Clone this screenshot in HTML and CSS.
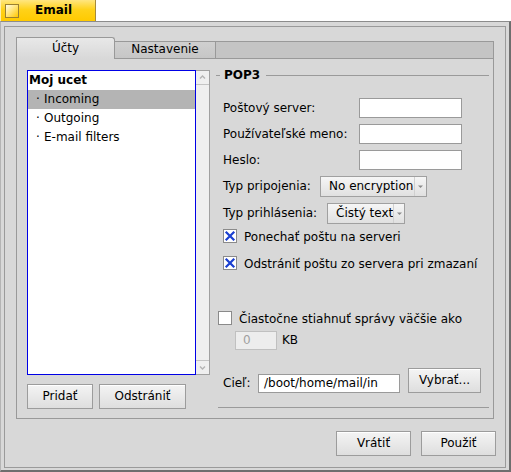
FILE: index.html
```html
<!DOCTYPE html>
<html>
<head>
<meta charset="utf-8">
<title>Email</title>
<link rel="stylesheet" href="styles.css">
</head>
<body>
<div class="titlebar">
  <div class="wtab">
    <span class="close"></span>
    <span class="wtitle">Email</span>
  </div>
</div>
<div class="window">
  <div class="frame">
    <div class="tabview">
      <div class="tabs">
        <div class="tab active">Účty</div>
        <div class="tab inactive">Nastavenie</div>
        <div class="tabfill"></div>
      </div>
      <div class="tabbody">
        <div class="leftcol">
          <div class="listwrap">
            <div class="list">
              <div class="li head">Moj ucet</div>
              <div class="li sel"><span class="dot">·</span>Incoming</div>
              <div class="li"><span class="dot">·</span>Outgoing</div>
              <div class="li"><span class="dot">·</span>E-mail filters</div>
            </div>
            <div class="vscroll">
              <div class="sarrow up"><svg width="13" height="13" viewBox="0 0 13 13"><path d="M4 7.5 L6.5 5 L9 7.5" fill="none" stroke="#b4b4b4" stroke-width="1.4"/></svg></div>
              <div class="strack"></div>
              <div class="sarrow down"><svg width="13" height="13" viewBox="0 0 13 13"><path d="M4 5.5 L6.5 8 L9 5.5" fill="none" stroke="#b4b4b4" stroke-width="1.4"/></svg></div>
            </div>
          </div>
          <div class="btnrow">
            <div class="btn b-add">Pridať</div>
            <div class="btn b-del">Odstrániť</div>
          </div>
        </div>
        <div class="rightcol">
          <div class="legend">
            <span class="gline short"></span>
            <span class="gtext">POP3</span>
            <span class="gline long"></span>
          </div>
          <div class="fields">
            <div class="flabel">Poštový server:</div>
            <div class="input"></div>
            <div class="flabel">Používateľské meno:</div>
            <div class="input"></div>
            <div class="flabel">Heslo:</div>
            <div class="input"></div>
          </div>
          <div class="prow r1">
            <div class="plabel l1">Typ pripojenia:</div>
            <div class="popup p1"><span class="ptext">No encryption</span><span class="parrow"><svg width="7" height="4" viewBox="0 0 7 4"><path d="M1 0.5 L3.5 3 L6 0.5 Z" fill="#8a8a8a"/></svg></span></div>
          </div>
          <div class="prow r2">
            <div class="plabel l2">Typ prihlásenia:</div>
            <div class="popup p2"><span class="ptext">Čistý text</span><span class="parrow"><svg width="7" height="4" viewBox="0 0 7 4"><path d="M1 0.5 L3.5 3 L6 0.5 Z" fill="#8a8a8a"/></svg></span></div>
          </div>
          <div class="cbrow c1">
            <span class="cb"><svg width="14" height="14" viewBox="0 0 14 14"><path d="M3.5 3.5 L10.5 10.5 M10.5 3.5 L3.5 10.5" stroke="#1a3fd0" stroke-width="2.2" stroke-linecap="square"/></svg></span>
            <span class="cbtext">Ponechať poštu na serveri</span>
          </div>
          <div class="cbrow c2">
            <span class="cb"><svg width="14" height="14" viewBox="0 0 14 14"><path d="M3.5 3.5 L10.5 10.5 M10.5 3.5 L3.5 10.5" stroke="#1a3fd0" stroke-width="2.2" stroke-linecap="square"/></svg></span>
            <span class="cbtext">Odstrániť poštu zo servera pri zmazaní</span>
          </div>
          <div class="cbrow c3">
            <span class="cb"></span>
            <span class="cbtext">Čiastočne stiahnuť správy väčšie ako</span>
          </div>
          <div class="kbrow">
            <div class="input small">0</div>
            <span class="kb">KB</span>
          </div>
          <div class="destrow">
            <div class="dlabel">Cieľ:</div>
            <div class="input dest">/boot/home/mail/in</div>
            <div class="btn b-pick">Vybrať...</div>
          </div>
          <div class="gbottom"></div>
        </div>
      </div>
    </div>
    <div class="actions">
      <div class="btn b-act">Vrátiť</div>
      <div class="btn b-act">Použiť</div>
    </div>
  </div>
</div>
</body>
</html>
```

FILE: styles.css
```css
* { box-sizing: border-box; }
html, body { margin: 0; padding: 0; background: #ffffff; }
body {
  font-family: "DejaVu Sans", "Noto Sans", sans-serif;
  font-size: 12px;
  color: #000;
  width: 511px;
  height: 472px;
  overflow: hidden;
}

/* title tab */
.titlebar { height: 21px; display: flex; }
.wtab {
  width: 96px;
  height: 21px;
  background: linear-gradient(#ffe680, #ffd21a 45%, #ffca00);
  border-left: 1px solid #ffeeaa;
  border-right: 1px solid #a48a3c;
  display: flex;
  align-items: flex-start;
  padding-left: 4px;
}
.close {
  width: 14px;
  height: 14px;
  margin-top: 4px;
  border: 1px solid #9a8030;
  background: linear-gradient(135deg, #fffbe6 0%, #ffe680 45%, #ffc800 100%);
}
.wtitle {
  margin-left: 16px;
  font-weight: bold;
  line-height: 21px;
}

/* window frame */
.window {
  height: 451px;
  background: #d8d8d8;
  border-top: 1px solid #8c8c8c;
  border-left: 1px solid #b4b4b4;
  border-right: 2px solid #6e6e6e;
  border-bottom: 2px solid #6e6e6e;
  padding: 4px 3px 2px 3px;
}
.frame {
  height: 442px;
  border: 1px solid #9a9a9a;
  padding: 10px 11px 0 11px;
}

/* tab view */
.tabs { display: flex; height: 22px; align-items: flex-end; }
.tab { text-align: center; }
.tab.active {
  width: 99px;
  height: 22px;
  border: 1px solid #999;
  border-bottom: none;
  border-top-right-radius: 3px;
  background: linear-gradient(#e8e8e8, #d8d8d8);
  line-height: 20px;
}
.tab.inactive {
  width: 101px;
  height: 18px;
  border-top: 1px solid #999;
  border-right: 1px solid #999;
  border-bottom: 1px solid #999;
  background: linear-gradient(#d0d0d0, #c6c6c6);
  line-height: 15px;
}
.tabfill {
  flex: 1;
  height: 18px;
  border-top: 1px solid #999;
  border-right: 1px solid #999;
  border-bottom: 1px solid #999;
  background: #c4c4c4;
}
.tabbody {
  height: 360px;
  border: 1px solid #999;
  border-top: none;
  display: flex;
  padding: 11px 4px 0 10px;
  gap: 6px;
}

/* left column */
.leftcol { width: 183px; display: flex; flex-direction: column; }
.listwrap { display: flex; height: 305px; }
.list {
  width: 169px;
  border: 1px solid #0000e6;
  background: #fff;
}
.li { height: 19px; line-height: 19px; padding-left: 8px; white-space: nowrap; }
.li.head { font-weight: bold; padding-left: 1px; }
.li.sel { background: #b4b4b4; }
.dot { display: inline-block; width: 8px; }
.vscroll {
  width: 14px;
  border: 1px solid #a0a0a0;
  border-left: none;
  background: #efefef;
  display: flex;
  flex-direction: column;
}
.sarrow { height: 14px; display: flex; align-items: center; justify-content: center; }
.sarrow.up { border-bottom: 1px solid #c4c4c4; }
.sarrow.down { border-top: 1px solid #c4c4c4; }
.strack { flex: 1; }

.btnrow { display: flex; gap: 6px; margin-top: 9px; }
.btn {
  height: 25px;
  border: 1px solid #9c9c9c;
  background: linear-gradient(#f4f4f4, #dedede);
  box-shadow: inset 0 1px 0 #ffffff;
  text-align: center;
  line-height: 22px;
  white-space: nowrap;
}
.b-add { width: 66px; }
.b-del { width: 87px; }

/* right column */
.rightcol { width: 274px; display: flex; flex-direction: column; }
.legend { display: flex; align-items: center; height: 14px; margin-top: -2px; }
.gline { height: 1px; background: #9a9a9a; }
.gline.short { width: 4px; }
.gline.long { flex: 1; }
.gtext { font-weight: bold; padding: 0 6px 0 4px; line-height: 14px; }

.fields {
  display: grid;
  grid-template-columns: 136px 103px;
  grid-auto-rows: 20px;
  row-gap: 6px;
  margin: 16px 0 0 7px;
}
.flabel { line-height: 20px; white-space: nowrap; }
.input {
  height: 20px;
  border: 1px solid #9a9a9a;
  background: #fff;
  white-space: nowrap;
}

.prow { display: flex; height: 21px; margin-left: 7px; }
.prow.r1 { margin-top: 6px; }
.prow.r2 { margin-top: 6px; }
.plabel { line-height: 21px; white-space: nowrap; }
.plabel.l1 { width: 97px; }
.plabel.l2 { width: 104px; }
.popup {
  height: 21px;
  border: 1px solid #a0a0a0;
  background: linear-gradient(#f6f6f6, #e0e0e0);
  display: flex;
}
.popup.p1 { width: 107px; }
.popup.p2 { width: 78px; }
.ptext { flex: 1; line-height: 19px; padding-left: 8px; white-space: nowrap; }
.parrow {
  width: 12px;
  border-left: 1px solid #d0d0d0;
  display: flex;
  align-items: center;
  justify-content: center;
}

.cbrow { display: flex; height: 15px; margin-left: 7px; }
.cbrow.c1 { margin-top: 5px; }
.cbrow.c2 { margin-top: 12px; }
.cbrow.c3 { margin-top: 40px; margin-left: 2px; }
.cb {
  width: 14px;
  height: 14px;
  border: 1px solid #8a8a8a;
  background: #fff;
  display: flex;
  align-items: center;
  justify-content: center;
}
.cb svg { margin: -1px; }
.cbtext { margin-left: 7px; line-height: 14px; margin-top: 1px; white-space: nowrap; }

.kbrow { display: flex; height: 19px; margin: 5px 0 0 19px; }
.input.small {
  width: 42px;
  height: 19px;
  background: #ededed;
  border-color: #c0c0c0;
  color: #a0a0a0;
  line-height: 17px;
  padding-left: 7px;
}
.kb { margin-left: 5px; line-height: 19px; }

.destrow { display: flex; align-items: flex-end; height: 25px; margin: 18px 0 0 7px; }
.dlabel { width: 35px; line-height: 17px; margin-bottom: 1px; }
.input.dest { width: 142px; height: 19px; line-height: 17px; padding-left: 5px; }
.b-pick { width: 73px; margin-left: 8px; }

.gbottom { height: 1px; background: #9a9a9a; margin: 14px 0 0 2px; }

/* bottom actions */
.actions {
  display: flex;
  justify-content: flex-end;
  gap: 10px;
  margin: 12px -2px 0 0;
}
.b-act { width: 75px; }
```
